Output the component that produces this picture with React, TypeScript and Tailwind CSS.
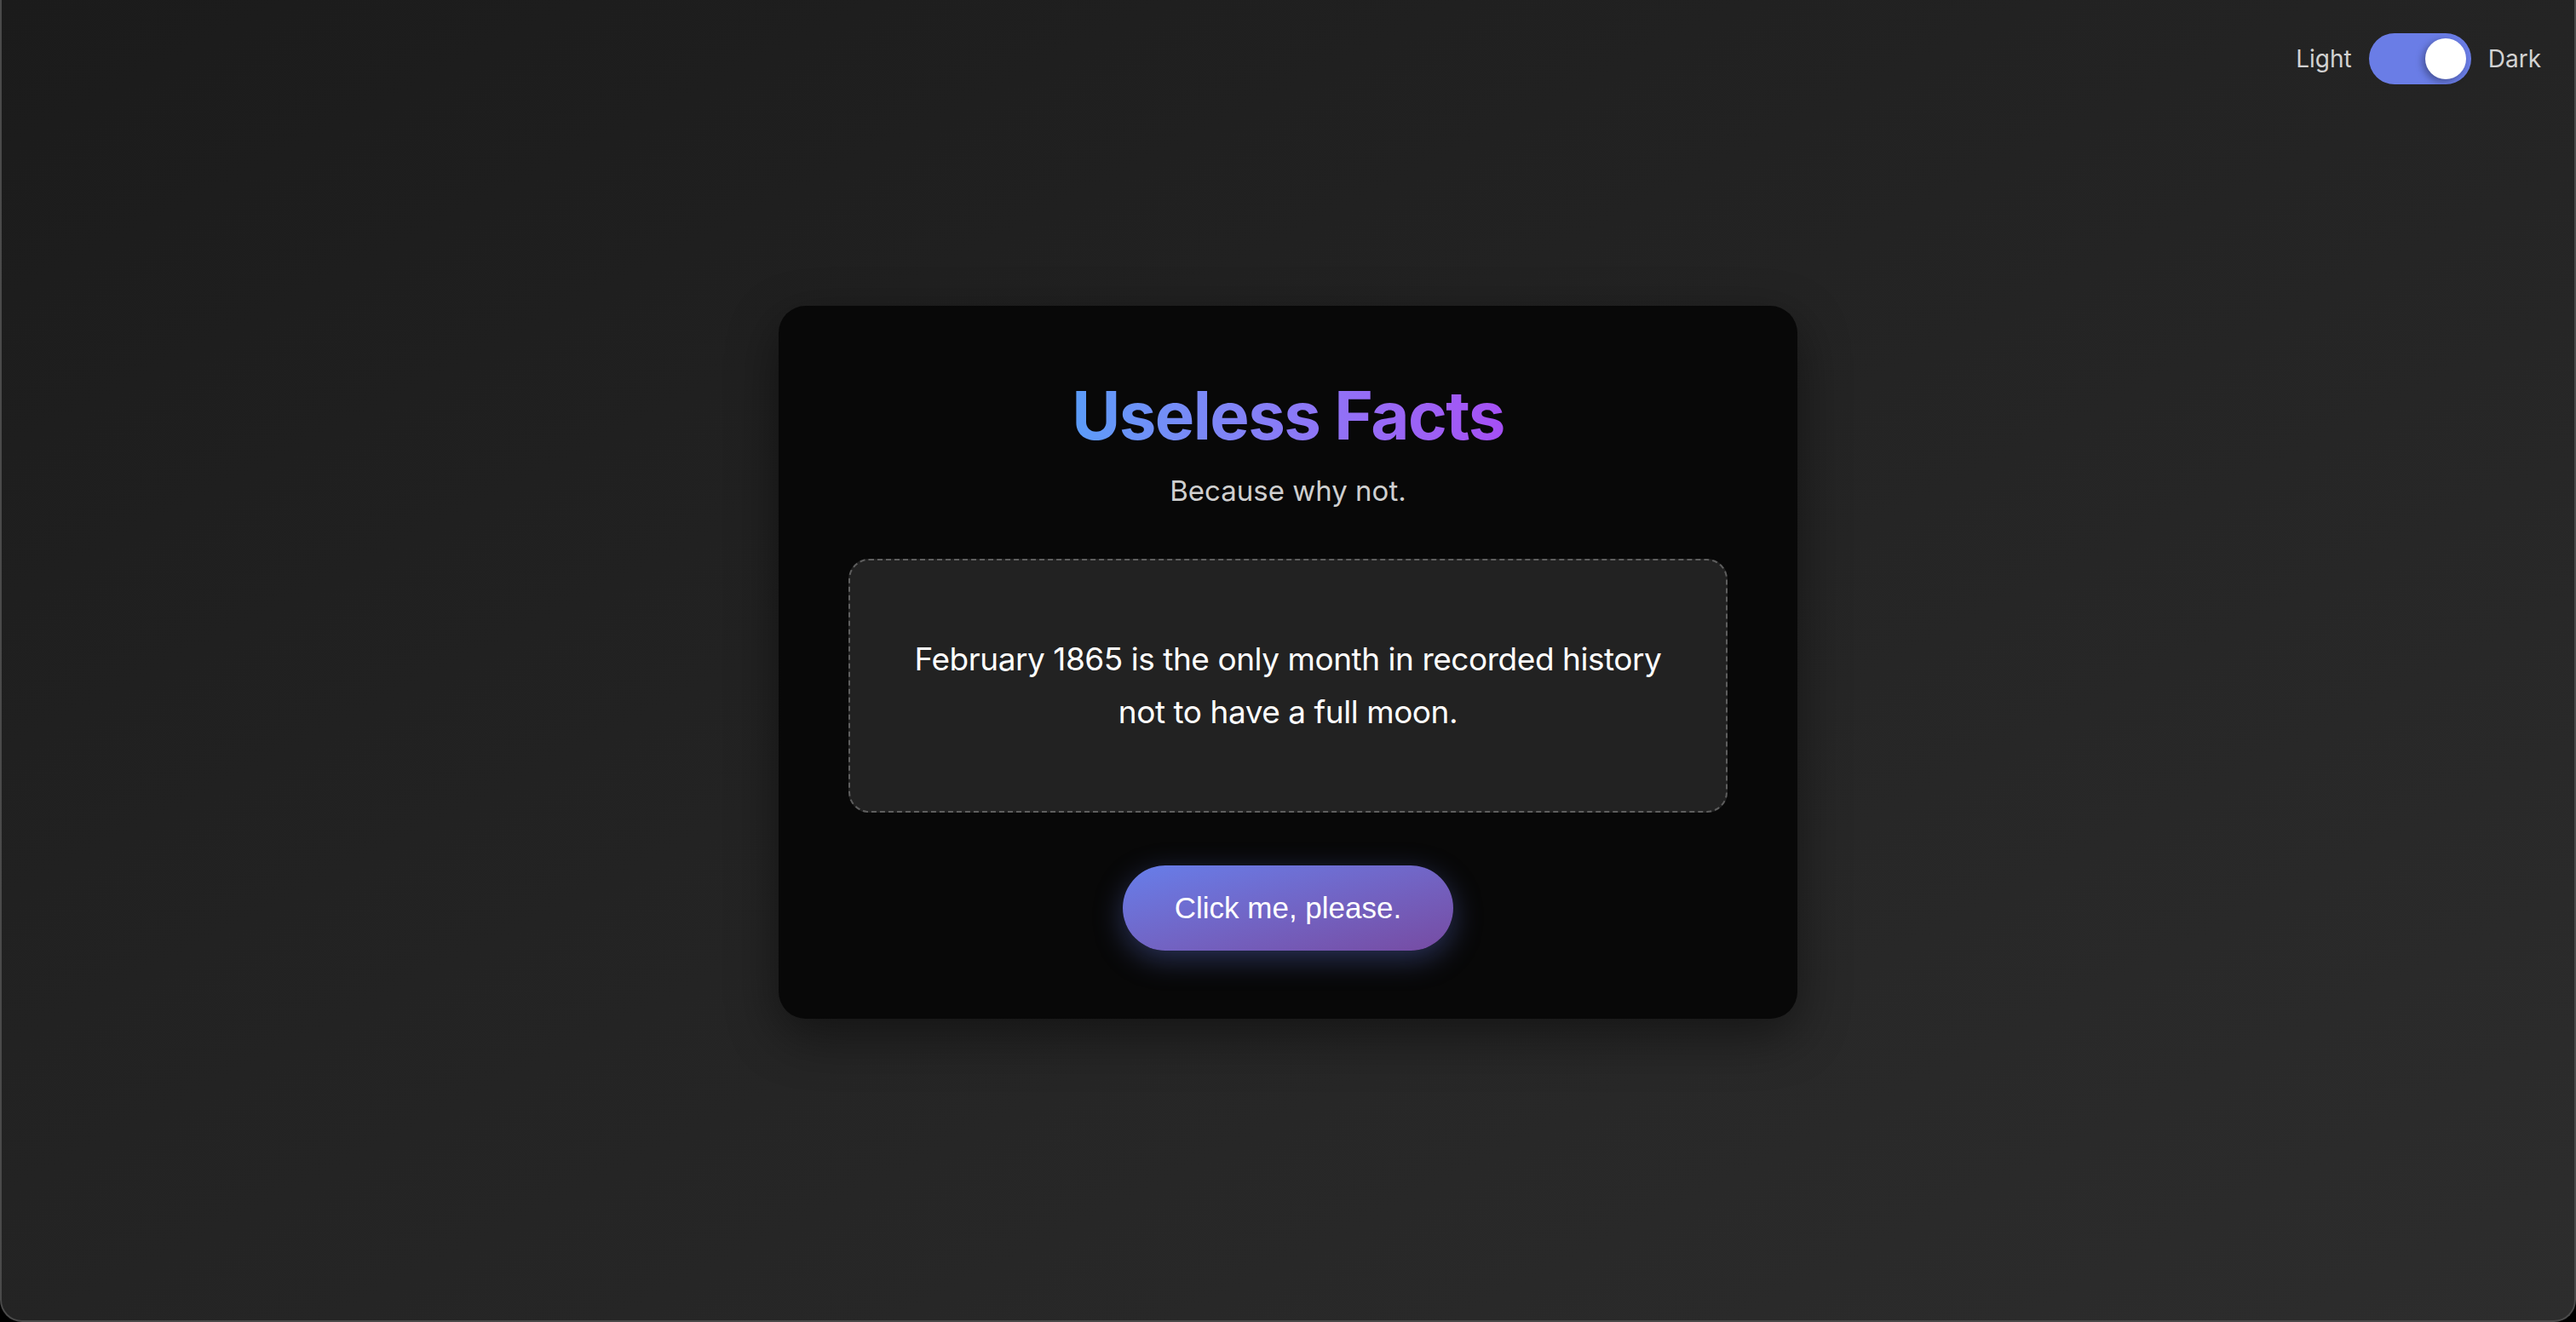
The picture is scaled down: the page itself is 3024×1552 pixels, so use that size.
import { useState } from "react";

const facts = [
  "February 1865 is the only month in recorded history not to have a full moon.",
];

const ThemeToggle = ({ dark, onToggle }: { dark: boolean; onToggle: () => void }) => {
  return (
    <div className="absolute top-[39px] right-[39px] flex items-center gap-[20px] text-[28px] text-[#d2d2d2]">
      <span>Light</span>
      <button
        onClick={onToggle}
        className="flex h-[60px] w-[120px] items-center rounded-full bg-[#6a7de6] px-[6px]"
      >
        <span
          className={
            dark
              ? "ml-auto block h-[48px] w-[48px] rounded-full bg-white shadow-[-3px_3px_8px_rgba(0,0,0,0.35)]"
              : "block h-[48px] w-[48px] rounded-full bg-white shadow-[3px_3px_8px_rgba(0,0,0,0.35)]"
          }
        />
      </button>
      <span>Dark</span>
    </div>
  );
};

export default function App() {
  const [dark, setDark] = useState(true);
  const [index, setIndex] = useState(0);

  return (
    <div className="min-h-screen bg-black font-['Inter','Noto_Sans',sans-serif]">
      {/* window frame */}
      <div className="relative flex h-[1552px] w-full items-center justify-center rounded-b-[26px] border-x-2 border-b-2 border-[#4a4a4a] bg-linear-to-br from-[#1b1b1b] to-[#2d2d2d]">
        <ThemeToggle dark={dark} onToggle={() => setDark(!dark)} />

        {/* Card */}
        <div className="mt-[4px] flex w-[1196px] flex-col items-center rounded-[32px] bg-[#080808] px-[82px] pt-[82px] pb-[80px] shadow-[0_20px_60px_rgba(0,0,0,0.45)]">
          <h1 className="inline-block bg-linear-to-r from-[#5a9cf8] to-[#a54ff4] bg-clip-text text-[78px] leading-[94px] font-bold tracking-[-0.02em] text-transparent">
            Useless Facts
          </h1>
          <p className="mt-[15px] text-[33px] leading-[52px] text-[#cfcfcf]">Because why not.</p>

          {/* Fact box */}
          <div className="mt-[54px] flex min-h-[298px] w-full items-center justify-center rounded-[24px] border-2 border-dashed border-[#5e5e5e] bg-[#222222] px-[60px] py-[40px]">
            <p className="text-center text-[37px] leading-[62px] tracking-[-0.0125em] text-white">
              {facts[index]}
            </p>
          </div>

          <button
            onClick={() => setIndex((index + 1) % facts.length)}
            className="mt-[62px] rounded-full bg-linear-to-br from-[#667eea] to-[#764ba2] px-[61px] py-[30px] font-['Liberation_Sans',Arial,sans-serif] text-[35px] leading-[40px] text-white shadow-[0_10px_34px_rgba(102,126,234,0.35)]"
          >
            Click me, please.
          </button>
        </div>
      </div>
    </div>
  );
}
